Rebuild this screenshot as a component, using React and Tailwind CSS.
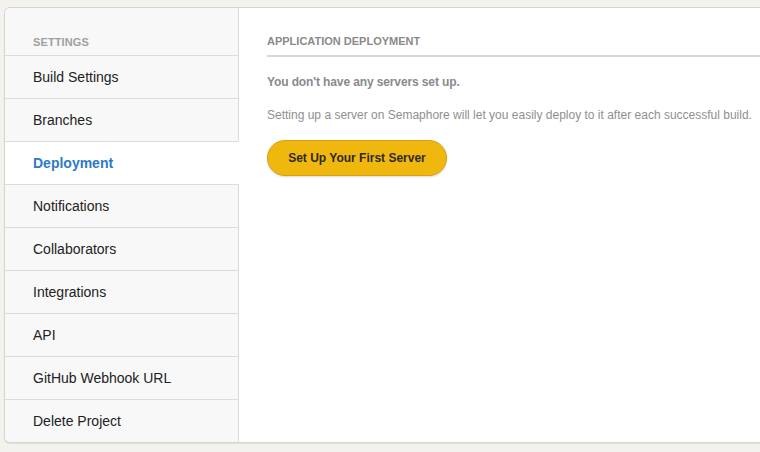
import React from "react";

const items = [
  "Build Settings",
  "Branches",
  "Deployment",
  "Notifications",
  "Collaborators",
  "Integrations",
  "API",
  "GitHub Webhook URL",
  "Delete Project",
];

const Sidebar = ({ active }) => (
  <aside className="w-[234px] shrink-0 bg-[#f8f8f8] flex flex-col">
    <div className="h-[47px] border-r border-[#dcdcdc] flex items-end pl-[28px] pb-[5px]">
      <span className="text-[11px] font-bold uppercase text-[#a0a0a0] tracking-[0.01em]">Settings</span>
    </div>
    {items.map((label) => {
      const on = label === active;
      return (
        <div
          key={label}
          className={
            on
              ? "h-[43px] border-t border-[#dcdcdc] border-r border-r-white bg-white flex items-center pl-[28px] text-[14px] font-bold text-[#2b7bc7]"
              : "h-[43px] border-t border-[#dcdcdc] border-r flex items-center pl-[28px] text-[14px] text-[#222]"
          }
        >
          {label}
        </div>
      );
    })}
  </aside>
);

export default function App() {
  return (
    <div
      className="h-[452px] w-[760px] overflow-hidden bg-[#f3f2ed] pt-[7px] pl-[4px]"
      style={{ fontFamily: '"Liberation Sans", Arial, sans-serif' }}
    >
      <div className="flex h-[436px] bg-white border border-r-0 border-[#d4d4d4] rounded-l-[6px] overflow-hidden shadow-[0_1px_1px_rgba(0,0,0,0.08)]">
        <Sidebar active="Deployment" />
        <main className="flex-1 pl-[28px]">
          <div className="h-[49px] border-b-2 border-[#d6d6d6] flex items-end pb-[6px]">
            <h2 className="text-[11px] font-bold uppercase text-[#8a8a8a]">Application Deployment</h2>
          </div>
          <p className="mt-[16px] text-[12px] font-bold text-[#8a8a8a] tracking-[-0.01em]">You don't have any servers set up.</p>
          <p className="mt-[15px] text-[12px] text-[#8f8f8f]">
            Setting up a server on Semaphore will let you easily deploy to it after each successful build.
          </p>
          <button className="mt-[16px] h-[36px] w-[180px] rounded-full bg-[#f0b80f] border border-[#d9a20a] shadow-[0_1px_2px_rgba(0,0,0,0.15)] text-[12px] font-bold text-[#2c2a24]">
            Set Up Your First Server
          </button>
        </main>
      </div>
    </div>
  );
}
